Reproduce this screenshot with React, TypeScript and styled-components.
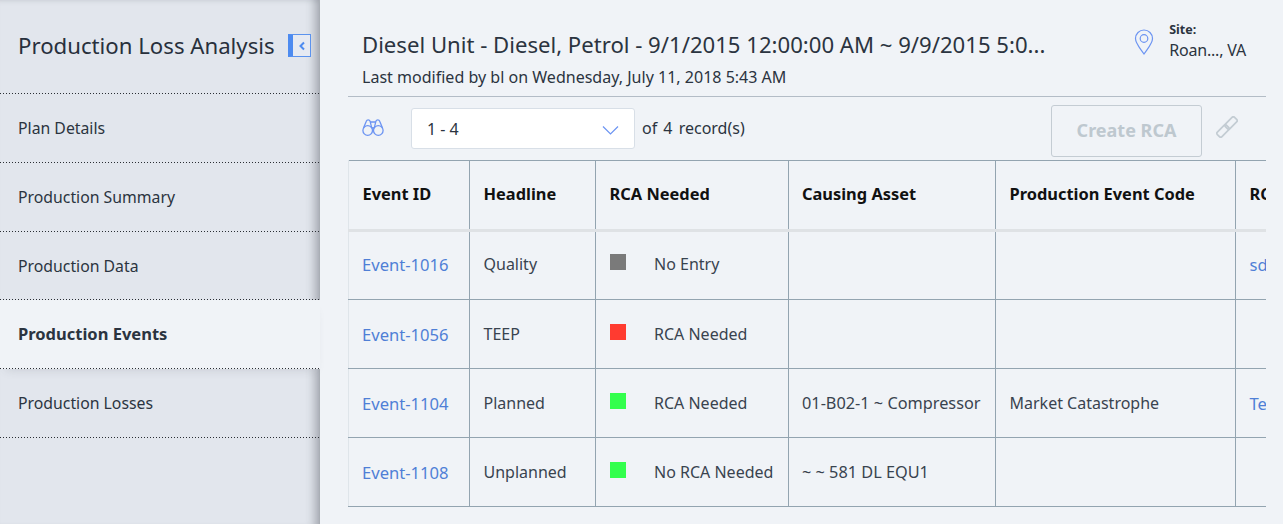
import React from "react";
import styled, { createGlobalStyle } from "styled-components";

const Global = createGlobalStyle`
  html, body { margin: 0; padding: 0; height: 100%; overflow: hidden; background: #f0f3f7; }
  #root { height: 100%; }
  * { box-sizing: border-box; }
`;

const Page = styled.div`
  display: flex;
  width: 1283px;
  height: 524px;
  overflow: hidden;
  font-family: "Noto Sans", "Open Sans", sans-serif;
  color: #2b3440;
  background: #f0f3f7;
`;

const Sidebar = styled.aside`
  flex: none;
  width: 320px;
  height: 524px;
  display: flex;
  flex-direction: column;
  background: #e2e6ed;
  border-right: 1px solid #a9aeb5;
  box-shadow: inset -12px 0 10px -8px rgba(60, 66, 76, 0.38), inset 0 5px 5px -4px rgba(60, 66, 76, 0.12);
`;

const DottedLine = `
  background-image: repeating-linear-gradient(to right, #2a2e34 0 1px, transparent 1px 3px);
  background-size: 100% 1px;
  background-position: left bottom;
  background-repeat: no-repeat;
`;

const SidebarHeader = styled.div`
  height: 94px;
  flex: none;
  display: flex;
  align-items: center;
  justify-content: space-between;
  padding: 0 8px 3px 18px;
  ${DottedLine}
`;

const SidebarTitle = styled.h1`
  margin: 0;
  font-size: 22.2px;
  font-weight: 400;
  white-space: nowrap;
  color: #28303c;
`;

const Collapse = styled.button`
  width: 23px;
  height: 23px;
  padding: 0;
  display: flex;
  align-items: center;
  justify-content: center;
  background: #e6eaf2;
  border: 1px solid #5b93ee;
  border-left: 5px solid #4d8bf0;
`;

const NavItem = styled.div<{ $active?: boolean }>`
  height: 68.75px;
  flex: none;
  width: ${(p) => (p.$active ? "320px" : "auto")};
  display: flex;
  align-items: center;
  padding: 0 0 ${(p) => (p.$active ? "2px" : "0")} 18px;
  font-size: ${(p) => (p.$active ? "16.5px" : "15.8px")};
  font-weight: ${(p) => (p.$active ? 700 : 400)};
  color: #2b3440;
  background-color: ${(p) => (p.$active ? "#f0f3f7" : "transparent")};
  ${DottedLine}
  position: relative;
  box-shadow: ${(p) => (p.$active ? "0 6px 10px -6px rgba(60,66,76,.18)" : "none")};
`;

const Main = styled.main`
  flex: none;
  width: 918px;
  margin-left: 28px;
  display: flex;
  flex-direction: column;
`;

const Header = styled.header`
  height: 97px;
  flex: none;
  display: flex;
  justify-content: space-between;
  border-bottom: 1px solid #b3bcc6;
  padding: 30px 20px 0 14px;
`;

const TitleBlock = styled.div`
  display: flex;
  flex-direction: column;
`;

const Title = styled.h2`
  margin: 0;
  font-size: 22.13px;
  line-height: 29px;
  font-weight: 400;
  white-space: nowrap;
  color: #2b3440;
`;

const Modified = styled.div`
  margin-top: 8px;
  font-size: 16.05px;
  line-height: 20px;
  white-space: nowrap;
`;

const Site = styled.div`
  display: flex;
  gap: 15px;
  margin-top: -8px;
`;

const SiteIcon = styled.svg`
  width: 20px;
  height: 26px;
  margin-top: 7px;
`;

const SiteText = styled.div`
  display: flex;
  flex-direction: column;
`;

const SiteLabel = styled.span`
  font-size: 12.5px;
  line-height: 16px;
  font-weight: 700;
`;

const SiteValue = styled.span`
  font-size: 16px;
  line-height: 24px;
  letter-spacing: -0.2px;
`;

const Toolbar = styled.div`
  height: 63px;
  flex: none;
  display: flex;
  align-items: center;
  padding: 0 28px 0 14px;
`;

const Binoculars = styled.svg`
  width: 22px;
  height: 22px;
  margin: -3px 0 0 0;
`;

const Select = styled.div`
  width: 224px;
  height: 41px;
  margin: 0 0 0 27px;
  display: flex;
  align-items: center;
  justify-content: space-between;
  padding: 0 15px;
  background: #fff;
  border: 1px solid #d8dfe7;
  border-radius: 3px;
  font-size: 16px;
`;

const Chevron = styled.svg`
  width: 17px;
  height: 10px;
  margin-top: 2px;
`;

const Count = styled.span`
  margin: -2px 0 0 7px;
  font-size: 16px;
  word-spacing: 2px;
  white-space: nowrap;
`;

const CreateButton = styled.button`
  width: 151px;
  height: 52px;
  margin-left: auto;
  margin-top: 4px;
  padding: 0 0 2px;
  background: transparent;
  border: 1px solid #c4ccd3;
  border-radius: 3px;
  font: 700 18px "Noto Sans", sans-serif;
  color: #bec8cf;
`;

const LinkIcon = styled.svg`
  width: 22px;
  height: 22px;
  margin: -4px 0 0 14px;
`;

const TableClip = styled.div`
  overflow: hidden;
  width: 918px;
  padding-bottom: 4px;
`;

const Table = styled.table`
  border-collapse: collapse;
  table-layout: fixed;
  width: 1040px;
  border-top: 1px solid #93a4b0;
`;

const Th = styled.th<{ $w: number }>`
  width: ${(p) => p.$w}px;
  height: 70px;
  padding: 0 13.5px 4px;
  text-align: left;
  font-size: 16.4px;
  font-weight: 700;
  color: #111;
  white-space: nowrap;
  border-left: 1px solid #93a4b0;
  border-bottom: 3px solid #dfe2e5;
  &:first-child { border-left: 1px solid #dfe5ea; }
  &:nth-child(4) { padding-left: 13px; }
`;

const Row = styled.tr`
  &:first-child td { padding-bottom: 3px; }
`;

const Td = styled.td`
  height: 69px;
  padding: 0 13.5px;
  font-size: 16px;
  white-space: nowrap;
  color: #39434f;
  border-left: 1px solid #93a4b0;
  border-bottom: 1px solid #93a4b0;
  &:first-child { border-left: 1px solid #dfe5ea; padding-left: 13px; }
  &:nth-child(4) { padding-left: 13px; font-size: 16.3px; }
`;

const EventLink = styled.a`
  color: #4f7fd6;
  font-size: 16.6px;
  text-decoration: none;
`;

const StatusCell = styled.div`
  display: flex;
  align-items: center;
`;

const Swatch = styled.span<{ $c: string }>`
  width: 16px;
  height: 16px;
  flex: none;
  margin: -5px 28.5px 0 0;
  background: ${(p) => p.$c};
`;

const rows = [
  { id: "Event-1016", head: "Quality", color: "#7a7a7a", status: "No Entry", asset: "", code: "", rc: "sd" },
  { id: "Event-1056", head: "TEEP", color: "#ff3b30", status: "RCA Needed", asset: "", code: "", rc: "" },
  { id: "Event-1104", head: "Planned", color: "#33ff4d", status: "RCA Needed", asset: "01-B02-1 ~ Compressor", code: "Market Catastrophe", rc: "Te" },
  { id: "Event-1108", head: "Unplanned", color: "#33ff4d", status: "No RCA Needed", asset: "~ ~ 581 DL EQU1", code: "", rc: "" },
];

const nav = ["Plan Details", "Production Summary", "Production Data", "Production Events", "Production Losses"];

export default function App() {
  return (
    <Page>
      <Global />
      <Sidebar>
        <SidebarHeader>
          <SidebarTitle>Production Loss Analysis</SidebarTitle>
          <Collapse aria-label="Collapse">
            <svg width="8" height="10" viewBox="0 0 8 10">
              <path d="M6 1.5 2.5 5 6 8.5" fill="none" stroke="#4d8bf0" strokeWidth="2" />
            </svg>
          </Collapse>
        </SidebarHeader>
        {nav.map((n) => (
          <NavItem key={n} $active={n === "Production Events"}>{n}</NavItem>
        ))}
      </Sidebar>
      <Main>
        <Header>
          <TitleBlock>
            <Title>Diesel Unit - Diesel, Petrol - 9/1/2015 12:00:00 AM ~ 9/9/2015 5:0...</Title>
            <Modified>Last modified by bl on Wednesday, July 11, 2018 5:43 AM</Modified>
          </TitleBlock>
          <Site>
            <SiteIcon viewBox="0 0 20 26" fill="none" stroke="#6c94f2" strokeWidth="1.2">
              <path d="M10 25C6 19 1.5 14.5 1.5 9.5a8.5 8.5 0 0 1 17 0C18.5 14.5 14 19 10 25Z" />
              <circle cx="10" cy="9.5" r="3.8" />
            </SiteIcon>
            <SiteText>
              <SiteLabel>Site:</SiteLabel>
              <SiteValue>Roan..., VA</SiteValue>
            </SiteText>
          </Site>
        </Header>
        <Toolbar>
          <Binoculars viewBox="0 0 22 22" fill="none" stroke="#6c94f2" strokeWidth="1.3">
            <circle cx="5.7" cy="14.5" r="4.8" />
            <circle cx="16.3" cy="14.5" r="4.8" />
            <path d="M1.5 12 4.3 5.2a2 2 0 0 1 3.8 0l1.6 6.6M20.5 12l-2.8-6.8a2 2 0 0 0-3.8 0l-1.6 6.6M9.7 12.5c1-1 1.6-1 2.6 0M8 6h6" />
          </Binoculars>
          <Select>
            <span>1 - 4</span>
            <Chevron viewBox="0 0 17 10" fill="none" stroke="#6c94f2" strokeWidth="1.2">
              <path d="M1 1.5 8.5 9 16 1.5" />
            </Chevron>
          </Select>
          <Count>of 4 record(s)</Count>
          <CreateButton disabled>Create RCA</CreateButton>
          <LinkIcon viewBox="0 0 22 22" fill="none" stroke="#c3ccd3" strokeWidth="1.7">
            <rect x="0.5" y="11.75" width="13" height="6.5" rx="1.8" transform="rotate(-45 7 15)" />
            <rect x="8.5" y="3.75" width="13" height="6.5" rx="1.8" transform="rotate(-45 15 7)" />
          </LinkIcon>
        </Toolbar>
        <TableClip>
          <Table>
            <thead>
              <tr>
                <Th $w={121}>Event ID</Th>
                <Th $w={126}>Headline</Th>
                <Th $w={193}>RCA Needed</Th>
                <Th $w={207}>Causing Asset</Th>
                <Th $w={240}>Production Event Code</Th>
                <Th $w={153}>RCA Analysis</Th>
              </tr>
            </thead>
            <tbody>
              {rows.map((r) => (
                <Row key={r.id}>
                  <Td><EventLink href="#">{r.id}</EventLink></Td>
                  <Td>{r.head}</Td>
                  <Td>
                    <StatusCell>
                      <Swatch $c={r.color} />
                      {r.status}
                    </StatusCell>
                  </Td>
                  <Td>{r.asset}</Td>
                  <Td>{r.code}</Td>
                  <Td><EventLink href="#">{r.rc}</EventLink></Td>
                </Row>
              ))}
            </tbody>
          </Table>
        </TableClip>
      </Main>
    </Page>
  );
}
